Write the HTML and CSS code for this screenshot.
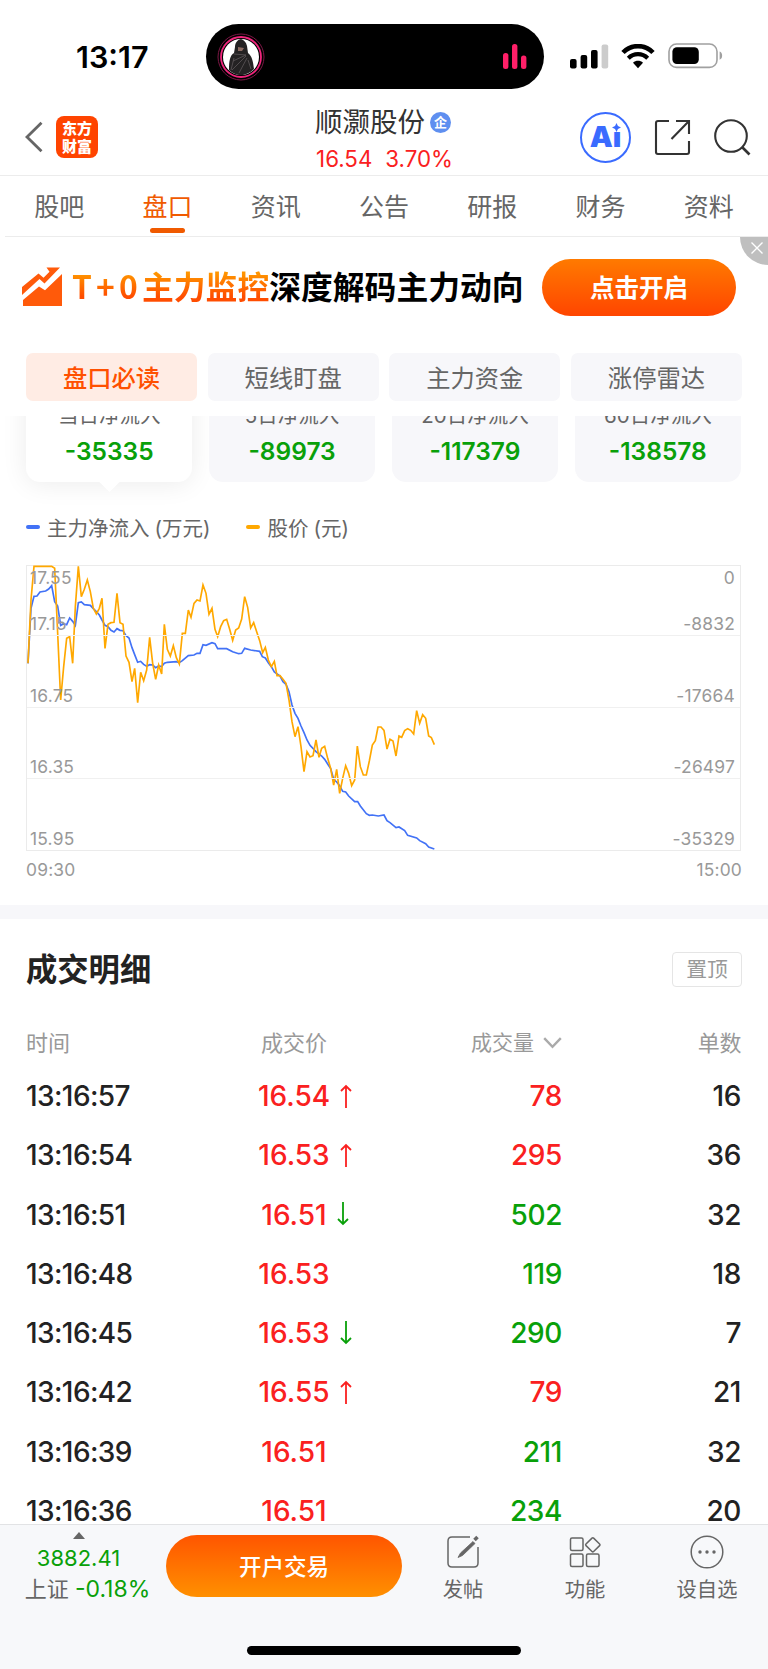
FILE: index.html
```html
<!DOCTYPE html>
<html lang="zh-CN">
<head>
    <meta charset="UTF-8">
    <meta name="viewport" content="width=device-width, initial-scale=1.0">
    <title>顺灏股份 - 盘口</title>
    <link rel="stylesheet" href="styles.css">
</head>
<body>
    <!-- 状态栏 -->
    <div class="status-bar">
        <div class="clock">13:17</div>
        <div class="island">
            <svg class="avatar" width="48" height="48" viewBox="0 0 48 48">
                <circle cx="24" cy="24" r="23" fill="none" stroke="#7d1746" stroke-width="1"/>
                <circle cx="24" cy="24" r="20" fill="none" stroke="#f0267c" stroke-width="1.8"/>
                <circle cx="24" cy="24" r="18" fill="#fff"/>
                <path d="M24 6c-4 1-6 4-6 8l-1 6c-4 2-5 8-5 17 7 7 17 7 25-1-1-8-2-13-6-16l-1-7c-1-4-3-6-6-7z" fill="#242223"/>
                <path d="M21 14l6 1-2 3h-4z" fill="#8b6b62"/>
                <path d="M17 21l12 1-13 6M29 23L15 37M30 25l-8 15M17 25l-3 12M31 27l3 9" fill="none" stroke="#5d5759" stroke-width="0.8"/>
            </svg>
            <svg class="wave" width="24" height="26" viewBox="0 0 24 26">
                <rect x="0" y="9" width="5.4" height="16" rx="2.5" fill="#ff1f68"/>
                <rect x="9" y="0" width="5.4" height="25" rx="2.5" fill="#ff1f68"/>
                <rect x="18" y="11.5" width="5.4" height="13.5" rx="2.5" fill="#ff1f68"/>
            </svg>
        </div>
        <svg class="signal" width="39" height="26" viewBox="0 0 39 26">
            <rect x="0" y="15" width="6.6" height="9.4" rx="2"/>
            <rect x="10.6" y="11" width="6.6" height="13.4" rx="2"/>
            <rect x="21" y="6" width="6.6" height="18.4" rx="2"/>
            <rect x="31.6" y="0.5" width="6.6" height="23.9" rx="2" fill="#ccc"/>
        </svg>
        <svg class="wifi" width="34" height="25" viewBox="0 0 34 25">
            <path d="M2 8.5C10 0 24 0 32 8.5" fill="none" stroke="#000" stroke-width="4.6"/>
            <path d="M7.3 14.2c5.5-5.4 13.9-5.4 19.4 0" fill="none" stroke="#000" stroke-width="4.2"/>
            <path d="M17 24.2l-5-5.4c2.8-2.6 7.2-2.6 10 0z"/>
        </svg>
        <svg class="battery" width="55" height="26" viewBox="0 0 55 26">
            <rect x="1" y="1" width="48" height="23.4" rx="7.5" fill="none" stroke="#a0a0a0" stroke-width="1.6"/>
            <rect x="4.4" y="4.3" width="26.4" height="16.8" rx="4.5"/>
            <path d="M51.6 8.6c3.4 1 3.4 7.2 0 8.2z" fill="#a0a0a0"/>
        </svg>
    </div>

    <!-- 标题栏 -->
    <div class="navbar">
        <div class="nav-left">
            <svg width="18" height="32" viewBox="0 0 18 32">
                <path d="M16.5 1.8L2 16l14.5 14.2" fill="none" stroke="#666" stroke-width="2.8"/>
            </svg>
            <div class="logo"><span>东方</span><span>财富</span></div>
        </div>
        <div class="stock">
            <div class="stock-name">顺灏股份<span class="badge">企</span></div>
            <div class="stock-price"><span>16.54</span><span>3.70%</span></div>
        </div>
        <div class="nav-right">
            <div class="ai">Ai
                <svg class="spark" width="9" height="9" viewBox="0 0 8 8"><path d="M4 0l1.3 2.7L8 4 5.3 5.3 4 8 2.7 5.3 0 4l2.7-1.3z" fill="#3a6bff"/></svg>
            </div>
            <svg class="share" width="37" height="37" viewBox="0 0 37 37">
                <path d="M15 2H4Q2 2 2 4v29q0 2 2 2h29q2 0 2-2V22M22 2h13v13M35 2L17.5 20" fill="none" stroke="#333" stroke-width="2.1"/>
            </svg>
            <svg class="search" width="37" height="37" viewBox="0 0 37 37">
                <circle cx="17" cy="17" r="15.8" fill="none" stroke="#333" stroke-width="2.1"/>
                <path d="M28 28l7.5 7.5" stroke="#333" stroke-width="2.6"/>
            </svg>
        </div>
    </div>

    <div class="tabs">
        <div class="tab">股吧</div>
        <div class="tab active">盘口</div>
        <div class="tab">资讯</div>
        <div class="tab">公告</div>
        <div class="tab">研报</div>
        <div class="tab">财务</div>
        <div class="tab">资料</div>
    </div>

    <!-- 广告条 -->
    <div class="banner">
        <svg class="banner-icon" width="41" height="40" viewBox="0 0 41 40">
            <path d="M0 20L16.5 6.5l5 4.2 6-6L24.5 0.5H38L22.5 16.5l-5-4.5L0 28z" fill="#ff5a0a"/>
            <path d="M1 39V33L17 19.5l6 3.8L40 7v32z" fill="#ff5a0a"/>
        </svg>
        <div class="slogan"><span class="hot"><span class="t0">T+0</span>主力监控</span>深度解码主力动向</div>
        <button class="open-btn">点击开启</button>
        <div class="close">
            <svg width="12" height="12" viewBox="0 0 12 12"><path d="M0.5 0.5l11 11M11.5 0.5l-11 11" stroke="#fff" stroke-width="1.4"/></svg>
        </div>
    </div>

    <div class="chips">
        <div class="chip active">盘口必读</div>
        <div class="chip">短线盯盘</div>
        <div class="chip">主力资金</div>
        <div class="chip">涨停雷达</div>
    </div>

    <!-- 净流入卡片 -->
    <div class="cards-view">
        <div class="cards">
            <div class="card active"><p>当日净流入</p><b>-35335</b></div>
            <div class="card"><p>5日净流入</p><b>-89973</b></div>
            <div class="card"><p>20日净流入</p><b>-117379</b></div>
            <div class="card"><p>60日净流入</p><b>-138578</b></div>
        </div>
    </div>

    <div class="legend">
        <div class="legend-item"><i class="blue"></i>主力净流入<span>(万元)</span></div>
        <div class="legend-item"><i class="orange"></i>股价<span>(元)</span></div>
    </div>

    <!-- 分时图 -->
    <div class="chart">
        <svg class="lines" width="715" height="286" viewBox="78 195 2145 858">
            <polyline stroke="#4272f6" points="84,490 93,325 102,289 111,288 120,276 137,273 146,267 155,257 164,305 173,318 182,376 191,371 200,374 209,354 218,364 226,376 235,308 244,306 253,314 271,316 280,326 289,335 298,345 306,360 315,376 324,380 333,391 342,396 351,386 360,391 369,392 378,407 387,414 396,443 404,464 413,487 422,484 431,493 440,499 449,494 458,495 467,503 476,498 485,500 493,490 502,487 529,485 538,488 547,482 565,467 582,465 591,460 600,460 609,434 618,436 636,428 645,431 653,446 680,446 698,455 716,461 725,460 734,445 752,450 779,454 787,470 796,474 805,488 814,500 823,516 840,528 849,545 858,553 867,575 876,615 885,640 894,655 903,678 912,698 921,720 930,736 948,755 965,768 974,778 983,792 992,806 1001,838 1010,846 1019,857 1028,874 1037,876 1046,888 1064,905 1073,905 1081,918 1099,941 1108,946 1117,945 1135,948 1152,945 1161,962 1170,968 1188,983 1197,981 1214,992 1223,1006 1250,1014 1259,1022 1277,1031 1286,1041 1303,1047"/>
            <polyline stroke="#ffa800" points="84,490 93,300 102,199 155,199 164,205 173,400 182,600 191,500 200,415 209,410 218,490 226,320 235,199 244,290 253,268 262,240 271,275 280,325 289,342 298,325 306,295 315,445 324,373 333,368 342,367 351,280 360,368 369,373 378,468 387,487 396,545 404,505 413,608 422,517 431,542 440,510 449,412 458,490 467,538 476,495 485,522 493,373 502,448 511,468 520,437 529,473 538,492 547,400 556,400 565,330 573,352 582,310 591,300 600,303 609,255 618,280 627,343 636,325 645,388 653,410 662,380 671,362 680,358 689,388 698,421 707,390 716,384 725,357 734,290 743,322 752,384 761,368 770,395 779,422 788,458 796,442 805,480 814,500 823,484 831,527 840,527 849,538 858,550 867,600 876,665 885,710 894,680 903,740 912,815 921,755 930,771 939,767 948,720 957,772 965,745 974,739 983,775 992,805 1001,855 1010,808 1019,880 1028,835 1037,797 1046,820 1055,857 1064,840 1072,738 1081,800 1090,825 1099,825 1108,783 1117,735 1126,722 1134,681 1143,681 1152,691 1161,747 1170,718 1179,723 1188,768 1197,708 1205,712 1214,692 1223,686 1232,691 1241,702 1250,632 1259,670 1268,644 1277,655 1286,708 1294,713 1303,734"/>
        </svg>
        <div class="band band-top">
            <div class="scale"><span>17.55</span><span>0</span></div>
            <div class="scale"><span>17.15</span><span>-8832</span></div>
        </div>
        <div class="band"><div class="scale"><span>16.75</span><span>-17664</span></div></div>
        <div class="band"><div class="scale"><span>16.35</span><span>-26497</span></div></div>
        <div class="band"><div class="scale"><span>15.95</span><span>-35329</span></div></div>
    </div>
    <div class="times"><span>09:30</span><span>15:00</span></div>

    <!-- 成交明细 -->
    <div class="details">
        <div class="details-head">
            <h2>成交明细</h2>
            <div class="pin">置顶</div>
        </div>
        <div class="row head">
            <div>时间</div>
            <div class="center">成交价</div>
            <div class="right volume">成交量<svg width="19" height="12" viewBox="0 0 19 12"><path d="M1.2 1.2l8.3 8.6 8.3-8.6" fill="none" stroke="#aaa" stroke-width="2.4"/></svg></div>
            <div class="right">单数</div>
        </div>
        <div class="row">
            <div class="time">13:16:57</div><div class="price">16.54<svg class="arrow up" viewBox="0 0 12 24"><path d="M6 24V2M1 7l5-5 5 5"/></svg></div><div class="right red">78</div><div class="right">16</div>
        </div>
        <div class="row">
            <div class="time">13:16:54</div><div class="price">16.53<svg class="arrow up" viewBox="0 0 12 24"><path d="M6 24V2M1 7l5-5 5 5"/></svg></div><div class="right red">295</div><div class="right">36</div>
        </div>
        <div class="row">
            <div class="time">13:16:51</div><div class="price">16.51<svg class="arrow down" viewBox="0 0 12 24"><path d="M6 0v22M1 17l5 5 5-5"/></svg></div><div class="right green">502</div><div class="right">32</div>
        </div>
        <div class="row">
            <div class="time">13:16:48</div><div class="price">16.53</div><div class="right green">119</div><div class="right">18</div>
        </div>
        <div class="row">
            <div class="time">13:16:45</div><div class="price">16.53<svg class="arrow down" viewBox="0 0 12 24"><path d="M6 0v22M1 17l5 5 5-5"/></svg></div><div class="right green">290</div><div class="right">7</div>
        </div>
        <div class="row">
            <div class="time">13:16:42</div><div class="price">16.55<svg class="arrow up" viewBox="0 0 12 24"><path d="M6 24V2M1 7l5-5 5 5"/></svg></div><div class="right red">79</div><div class="right">21</div>
        </div>
        <div class="row">
            <div class="time">13:16:39</div><div class="price">16.51</div><div class="right green">211</div><div class="right">32</div>
        </div>
        <div class="row last">
            <div class="time">13:16:36</div><div class="price">16.51</div><div class="right green">234</div><div class="right">20</div>
        </div>
    </div>

    <!-- 底部栏 -->
    <div class="bottom">
        <div class="toolbar">
            <div class="index">
                <i class="tri"></i>
                <div class="green">3882.41</div>
                <div class="index-line">上证 <span class="green">-0.18%</span></div>
            </div>
            <button class="trade-btn">开户交易</button>
            <div class="tool">
                <svg width="34" height="34" viewBox="0 0 34 34" fill="none" stroke="#666" stroke-width="1.5">
                    <path d="M24 2H6Q2 2 2 6v22q0 4 4 4h22q4 0 4-4V12"/>
                    <path d="M12 22.5l2.5-4.5L27 6.500l2 2L16.5 20.5z" fill="#666" stroke-width="0.8"/>
                    <path d="M28.5 5l3-3" stroke-width="3.5"/>
                </svg>
                <span>发帖</span>
            </div>
            <div class="tool">
                <svg width="34" height="34" viewBox="0 0 34 34" fill="none" stroke="#666" stroke-width="1.5">
                    <rect x="2.5" y="3" width="12.5" height="12.5" rx="1.5"/>
                    <rect x="2.5" y="19" width="12.5" height="12.5" rx="1.5"/>
                    <rect x="18.5" y="19" width="12.5" height="12.5" rx="1.5"/>
                    <path d="M24 3.1q0.8-0.8 1.6 0l6 5.9q0.8 0.8 0 1.6l-6 5.9q-0.8 0.8-1.6 0l-6-5.9q-0.8-0.8 0-1.6z"/>
                </svg>
                <span>功能</span>
            </div>
            <div class="tool">
                <svg width="34" height="34" viewBox="0 0 34 34">
                    <circle cx="17" cy="17" r="15.8" fill="none" stroke="#666" stroke-width="1.5"/>
                    <g fill="#666"><circle cx="10" cy="17" r="1.7"/><circle cx="17" cy="17" r="1.7"/><circle cx="24" cy="17" r="1.7"/></g>
                </svg>
                <span>设自选</span>
            </div>
        </div>
        <div class="home-bar"></div>
    </div>
</body>
</html>
```
FILE: styles.css
```css
* {
    box-sizing: border-box;
}
body {
    margin: 0;
    width: 768px;
    height: 1669px;
    overflow: hidden;
    display: flex;
    flex-direction: column;
    background: #fff;
    color: #222;
    font-family: Inter, 'Noto Sans CJK SC', sans-serif;
}
body > div {
    flex-shrink: 0;
}
svg {
    display: block;
    flex-shrink: 0;
}
.red {
    color: #fa2020;
}
.green {
    color: #09a009;
}

/* 状态栏 */
.status-bar {
    height: 100px;
    padding: 24px 45px 0 0;
    display: flex;
    align-items: flex-start;
}
.clock {
    width: 206px;
    padding-left: 76px;
    line-height: 66px;
    font-size: 30.5px;
    font-weight: 600;
    color: #000;
}
.island {
    width: 339px;
    height: 65px;
    border-radius: 33px;
    background: #000;
    display: flex;
    align-items: center;
    justify-content: space-between;
    padding: 0 17px 0 11px;
}
.signal {
    margin: 20px 0 0 26px;
}
.wifi {
    margin: 20px 0 0 12px;
}
.battery {
    margin: 19px 0 0 13px;
}

/* 标题栏 */
.navbar {
    height: 76px;
    border-bottom: 1px solid #ececec;
    display: grid;
    grid-template-columns: 240px 1fr 240px;
}
.nav-left {
    display: flex;
    align-items: center;
    padding: 0 0 2px 25px;
}
.logo {
    width: 42px;
    height: 42px;
    margin-left: 13px;
    border-radius: 8px;
    background: #ff4400;
    color: #fff;
    font-family: 'Noto Sans CJK SC', sans-serif;
    font-size: 15px;
    font-weight: 900;
    line-height: 18px;
    display: flex;
    flex-direction: column;
    align-items: center;
    justify-content: center;
}
.stock {
    text-align: center;
}
.stock-name {
    display: flex;
    align-items: center;
    justify-content: center;
    padding: 2px 2px 0 0;
    font-size: 27.5px;
    line-height: 40px;
    color: #333;
}
.badge {
    width: 21px;
    height: 21px;
    margin-left: 5px;
    border-radius: 50%;
    background: #5f8ff0;
    color: #fff;
    font-size: 13px;
    font-weight: 700;
    line-height: 20px;
}
.stock-price {
    display: flex;
    justify-content: center;
    gap: 13px;
    padding-left: 1px;
    font-size: 22.3px;
    line-height: 34px;
    color: #fa2020;
}
.nav-right {
    display: flex;
    align-items: center;
    padding: 0 0 2px 52px;
}
.ai {
    position: relative;
    width: 51px;
    height: 51px;
    border: 2px solid #3a6bff;
    border-radius: 50%;
    color: #3a6bff;
    font-size: 29px;
    font-weight: 900;
    line-height: 46px;
    text-align: center;
}
.spark {
    position: absolute;
    top: 9px;
    right: 8px;
    background: #fff;
}
.share {
    margin-left: 23px;
}
.search {
    margin-left: 23px;
}
.tabs {
    height: 61px;
    margin-left: 5px;
    padding-right: 5px;
    display: flex;
    border-bottom: 1px solid #ececec;
}
.tab {
    flex: 1;
    display: flex;
    flex-direction: column;
    align-items: center;
    font-size: 25px;
    line-height: 62px;
    color: #666;
}
.tab.active {
    color: #f05a00;
}
.tab.active::after {
    content: '';
    width: 35px;
    height: 5px;
    margin-top: -10px;
    border-radius: 3px;
    background: #f05a00;
}

/* 广告条 */
.banner {
    position: relative;
    height: 116px;
    padding: 22px 32px 0 22px;
    display: flex;
    align-items: flex-start;
    overflow: hidden;
}
.banner-icon {
    margin-top: 8px;
}
.slogan {
    margin-left: 9px;
    width: 470px;
    font-family: 'Noto Sans CJK SC', sans-serif;
    font-size: 31.8px;
    font-weight: 700;
    line-height: 53px;
    color: #000;
    white-space: nowrap;
}
.hot {
    background: linear-gradient(#ff9500 25%, #ff4d00 75%);
    -webkit-background-clip: text;
    background-clip: text;
    color: transparent;
}
.t0 {
    letter-spacing: 4.2px;
}
button {
    border: none;
    padding: 0 0 2px;
    color: #fff;
    font-family: inherit;
}
.open-btn {
    width: 194px;
    height: 57px;
    border-radius: 29px;
    background: linear-gradient(#ff7a00, #ff4500);
    font-size: 24.5px;
    font-weight: 700;
}
.close {
    position: absolute;
    top: -28px;
    right: -28px;
    width: 56px;
    height: 56px;
    border-radius: 50%;
    background: #bfbfbf;
    padding: 33px 0 0 11px;
}
.chips {
    height: 48px;
    padding: 0 26px;
    display: grid;
    grid-template-columns: repeat(4, 1fr);
    grid-template-rows: 48px;
    gap: 10.5px;
}
.chip {
    border-radius: 7px;
    background: #f7f7fa;
    color: #666;
    font-size: 24.3px;
    line-height: 51px;
    text-align: center;
}
.chip.active {
    background: #ffece4;
    color: #ff5000;
    font-weight: 500;
}

/* 卡片滚动到吸顶条下方 */
.cards-view {
    height: 66px;
    margin-top: 15px;
    padding: 0 27px 0 26px;
    clip-path: inset(0 0 -50px 0);
    display: flex;
}
.cards {
    width: 100%;
    height: 106px;
    margin-top: -40px;
    display: grid;
    grid-template-columns: repeat(4, 1fr);
    gap: 16.5px;
}
.card {
    position: relative;
    padding-top: 24px;
    border-radius: 14px;
    background: #f7f7fa;
    text-align: center;
}
.card.active {
    background: #fff;
    box-shadow: 0 2px 26px rgba(0, 0, 0, 0.08);
}
.card.active::after {
    content: '';
    position: absolute;
    left: 76px;
    bottom: -7px;
    width: 15px;
    height: 15px;
    background: #fff;
    transform: rotate(45deg);
}
.card p {
    margin: 0;
    font-size: 20.5px;
    line-height: 32px;
    color: #666;
}
.card b {
    display: block;
    font-size: 24.5px;
    font-weight: 600;
    line-height: 38px;
    color: #09a009;
}

.legend {
    height: 83px;
    padding: 30px 26px 0;
    display: flex;
    gap: 36px;
}
.legend-item {
    display: flex;
    align-items: center;
    height: 30px;
    font-size: 20.5px;
    color: #666;
}
.legend-item i {
    width: 14px;
    height: 4px;
    margin-right: 7px;
    border-radius: 2px;
}
.legend-item span {
    margin-left: 5px;
}
.legend-item .blue {
    background: #4272f6;
}
.legend-item .orange {
    background: #ffa800;
}
.chart {
    position: relative;
    width: 715px;
    height: 286px;
    margin-left: 26px;
    border: 1px solid #ebebeb;
    display: grid;
    grid-template-rows: 70px 72px 71px 71px;
}
.lines {
    position: absolute;
    top: -1px;
    left: -1px;
}
.lines polyline {
    fill: none;
    stroke-width: 5;
}
.band {
    position: relative;
    padding: 0 5px 0 3px;
    border-bottom: 1px solid #f0f0f0;
    display: flex;
    flex-direction: column;
    justify-content: flex-end;
}
.band:last-child {
    border-bottom: none;
}
.band-top {
    justify-content: space-between;
}
.scale, .times {
    display: flex;
    justify-content: space-between;
    font-size: 17.4px;
    letter-spacing: 0.2px;
    line-height: 23px;
    color: #999;
}
.times {
    height: 54px;
    padding: 7px 26px 0;
}

/* 成交明细 */
.details {
    height: 619px;
    padding-left: 26px;
    border-top: 14px solid #f7f7fa;
    overflow: hidden;
}
.details-head {
    width: 716px;
    height: 100px;
    display: flex;
    align-items: center;
    justify-content: space-between;
}
.details-head h2 {
    margin: 0 0 3px;
    font-size: 31.3px;
    font-weight: 600;
}
.pin {
    width: 70px;
    height: 35px;
    border: 1px solid #e5e5e5;
    border-radius: 4px;
    font-size: 20.8px;
    line-height: 34px;
    text-align: center;
    color: #999;
}
.row {
    display: grid;
    grid-template-columns: 208px 120px 208px 179px;
    height: 59.3px;
    line-height: 59.3px;
    font-size: 28px;
    font-weight: 450;
}
.row.head {
    height: 48px;
    line-height: 48px;
    font-size: 22px;
    font-weight: 400;
    color: #999;
}
.row.last {
    height: 55px;
}
.time {
    letter-spacing: -0.6px;
}
.center {
    text-align: center;
}
.right {
    text-align: right;
    letter-spacing: -0.4px;
}
.head .volume {
    display: flex;
    align-items: center;
    justify-content: flex-end;
    gap: 9px;
    font-size: 21px;
    letter-spacing: 0;
}
.price {
    display: grid;
    grid-template-columns: 1fr auto 1fr;
    align-items: center;
    color: #fa2020;
}
.price::before {
    content: '';
}
.arrow {
    width: 12px;
    height: 24px;
    margin: 0 0 2px 10px;
    fill: none;
    stroke-width: 1.8;
}
.arrow.up {
    stroke: #fa2020;
}
.arrow.down {
    stroke: #09a009;
}

/* 底部栏 */
.bottom {
    height: 146px;
    background: #f7f8fa;
    border-top: 1px solid #e2e3e5;
}
.toolbar {
    height: 121px;
    display: flex;
}
.index {
    width: 166px;
    padding: 7px 0 0 9px;
    display: flex;
    flex-direction: column;
    align-items: center;
    font-size: 22px;
    line-height: 31px;
}
.tri {
    margin-right: 18px;
    border: 6px solid transparent;
    border-top: none;
    border-bottom: 7px solid #666;
}
.index > .green {
    margin: 4px 18px 0 0;
}
.index-line {
    color: #666;
    white-space: nowrap;
}
.index-line .green {
    font-size: 23px;
}
.trade-btn {
    width: 236px;
    height: 62px;
    margin: 10px 0 0;
    border-radius: 31px;
    background: linear-gradient(#ff5500, #ff9000);
    font-size: 22.5px;
    font-weight: 500;
}
.tool {
    width: 122px;
    padding-top: 10px;
    display: flex;
    flex-direction: column;
    align-items: center;
    font-size: 20.3px;
    line-height: 30px;
    color: #666;
}
.tool span {
    margin-top: 6px;
}
.home-bar {
    width: 274px;
    height: 9px;
    margin: 0 auto;
    border-radius: 5px;
    background: #000;
}
```
